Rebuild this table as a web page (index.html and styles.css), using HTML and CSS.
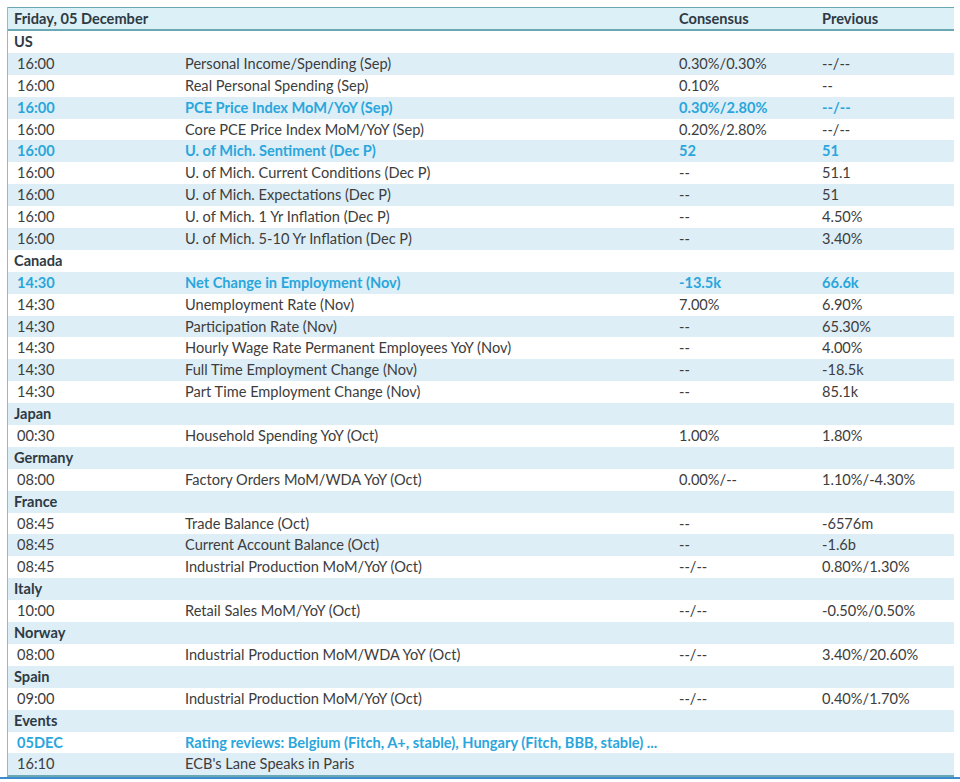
FILE: index.html
```html
<!DOCTYPE html>
<html>
<head>
<meta charset="utf-8">
<link rel="stylesheet" href="styles.css">
</head>
<body>
<div class="cal">
  <div class="row head"><div class="c1">Friday, 05 December</div><div></div><div>Consensus</div><div>Previous</div></div>
  <div class="row sec"><div class="c1">US</div><div></div><div></div><div></div></div>
  <div class="row"><div class="c1 t">16:00</div><div>Personal Income/Spending (Sep)</div><div>0.30%/0.30%</div><div>--/--</div></div>
  <div class="row"><div class="c1 t">16:00</div><div>Real Personal Spending (Sep)</div><div>0.10%</div><div>--</div></div>
  <div class="row hl"><div class="c1 t">16:00</div><div>PCE Price Index MoM/YoY (Sep)</div><div>0.30%/2.80%</div><div>--/--</div></div>
  <div class="row"><div class="c1 t">16:00</div><div>Core PCE Price Index MoM/YoY (Sep)</div><div>0.20%/2.80%</div><div>--/--</div></div>
  <div class="row hl"><div class="c1 t">16:00</div><div>U. of Mich. Sentiment (Dec P)</div><div>52</div><div>51</div></div>
  <div class="row"><div class="c1 t">16:00</div><div>U. of Mich. Current Conditions (Dec P)</div><div>--</div><div>51.1</div></div>
  <div class="row"><div class="c1 t">16:00</div><div>U. of Mich. Expectations (Dec P)</div><div>--</div><div>51</div></div>
  <div class="row"><div class="c1 t">16:00</div><div>U. of Mich. 1 Yr Inflation (Dec P)</div><div>--</div><div>4.50%</div></div>
  <div class="row"><div class="c1 t">16:00</div><div>U. of Mich. 5-10 Yr Inflation (Dec P)</div><div>--</div><div>3.40%</div></div>
  <div class="row sec"><div class="c1">Canada</div><div></div><div></div><div></div></div>
  <div class="row hl"><div class="c1 t">14:30</div><div>Net Change in Employment (Nov)</div><div>-13.5k</div><div>66.6k</div></div>
  <div class="row"><div class="c1 t">14:30</div><div>Unemployment Rate (Nov)</div><div>7.00%</div><div>6.90%</div></div>
  <div class="row"><div class="c1 t">14:30</div><div>Participation Rate (Nov)</div><div>--</div><div>65.30%</div></div>
  <div class="row"><div class="c1 t">14:30</div><div>Hourly Wage Rate Permanent Employees YoY (Nov)</div><div>--</div><div>4.00%</div></div>
  <div class="row"><div class="c1 t">14:30</div><div>Full Time Employment Change (Nov)</div><div>--</div><div>-18.5k</div></div>
  <div class="row"><div class="c1 t">14:30</div><div>Part Time Employment Change (Nov)</div><div>--</div><div>85.1k</div></div>
  <div class="row sec"><div class="c1">Japan</div><div></div><div></div><div></div></div>
  <div class="row"><div class="c1 t">00:30</div><div>Household Spending YoY (Oct)</div><div>1.00%</div><div>1.80%</div></div>
  <div class="row sec"><div class="c1">Germany</div><div></div><div></div><div></div></div>
  <div class="row"><div class="c1 t">08:00</div><div>Factory Orders MoM/WDA YoY (Oct)</div><div>0.00%/--</div><div>1.10%/-4.30%</div></div>
  <div class="row sec"><div class="c1">France</div><div></div><div></div><div></div></div>
  <div class="row"><div class="c1 t">08:45</div><div>Trade Balance (Oct)</div><div>--</div><div>-6576m</div></div>
  <div class="row"><div class="c1 t">08:45</div><div>Current Account Balance (Oct)</div><div>--</div><div>-1.6b</div></div>
  <div class="row"><div class="c1 t">08:45</div><div>Industrial Production MoM/YoY (Oct)</div><div>--/--</div><div>0.80%/1.30%</div></div>
  <div class="row sec"><div class="c1">Italy</div><div></div><div></div><div></div></div>
  <div class="row"><div class="c1 t">10:00</div><div>Retail Sales MoM/YoY (Oct)</div><div>--/--</div><div>-0.50%/0.50%</div></div>
  <div class="row sec"><div class="c1">Norway</div><div></div><div></div><div></div></div>
  <div class="row"><div class="c1 t">08:00</div><div>Industrial Production MoM/WDA YoY (Oct)</div><div>--/--</div><div>3.40%/20.60%</div></div>
  <div class="row sec"><div class="c1">Spain</div><div></div><div></div><div></div></div>
  <div class="row"><div class="c1 t">09:00</div><div>Industrial Production MoM/YoY (Oct)</div><div>--/--</div><div>0.40%/1.70%</div></div>
  <div class="row sec"><div class="c1">Events</div><div></div><div></div><div></div></div>
  <div class="row hl"><div class="c1 t">05DEC</div><div class="wide">Rating reviews: Belgium (Fitch, A+, stable), Hungary (Fitch, BBB, stable) ...</div></div>
  <div class="row"><div class="c1 t">16:10</div><div>ECB's Lane Speaks in Paris</div><div></div><div></div></div>
</div>
<div class="baseline"></div>
</body>
</html>
```
FILE: styles.css
```css
html, body {
  margin: 0;
  padding: 0;
  background: #ffffff;
}
body {
  font-family: Lato, "Open Sans", sans-serif;
  font-size: 14.6px;
  color: #3d3d3d;
}
.cal {
  margin: 7px 0 0 7px;
  width: 946px;
  border-left: 1px solid #9fb6be;
  border-bottom: 2px solid #6aa9b4;
}
.row {
  display: grid;
  grid-template-columns: 177px 494px 143px 1fr;
  height: 21.9px;
  line-height: 21.9px;
  white-space: nowrap;
}
.row:nth-child(odd) {
  background: #ddeef7;
}
.row.head {
  background: #dcf0f7;
  height: 21px;
  line-height: 21px;
  border-top: 1px solid #6aa9b4;
  border-bottom: 2px solid #6aa9b4;
  font-weight: bold;
  color: #2e3a44;
}
.c1 {
  padding-left: 6px;
}
.c1.t {
  padding-left: 9px;
}
.sec .c1 {
  font-weight: bold;
  color: #2e3a44;
}
.hl {
  font-weight: bold;
  color: #2aa6dc;
}
.wide {
  grid-column: 2 / 5;
}
.baseline {
  height: 2px;
  background: #3d8cd0;
}
```
